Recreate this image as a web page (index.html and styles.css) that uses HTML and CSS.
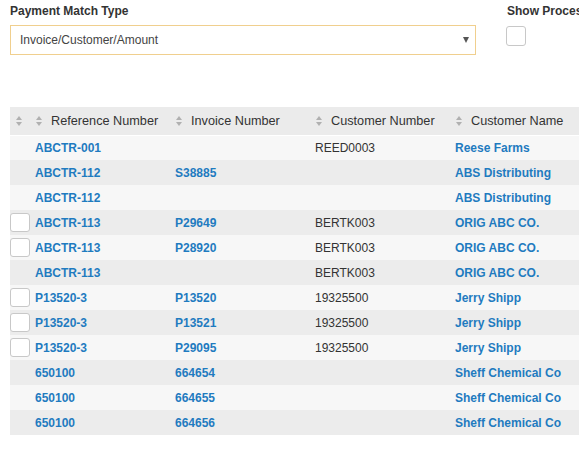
FILE: index.html
```html
<!DOCTYPE html>
<html lang="en">

<head>
    <meta charset="UTF-8">
    <title>Payment Match</title>
    <link rel="stylesheet" href="styles.css">
</head>

<body>

    <div class="page">

        <!-- Filtros -->
        <div class="filters">
            <div class="field match-type">
                <label class="field-label">Payment Match Type</label>
                <div class="select-box">
                    <span>Invoice/Customer/Amount</span>
                    <span class="caret"></span>
                </div>
            </div>
            <div class="field show-processed">
                <label class="field-label">Show Processed</label>
                <span class="check big"></span>
            </div>
        </div>

        <!-- Tabla -->
        <div class="grid-wrap">
            <table class="grid">
                <thead>
                    <tr>
                        <th class="col-check"><span class="sort"></span></th>
                        <th><span class="sort"></span>Reference Number</th>
                        <th><span class="sort"></span>Invoice Number</th>
                        <th><span class="sort"></span>Customer Number</th>
                        <th><span class="sort"></span>Customer Name</th>
                        <th><span class="sort"></span>Amount</th>
                    </tr>
                </thead>
                <tbody>
                    <tr>
                        <td></td>
                        <td><a>ABCTR-001</a></td>
                        <td></td>
                        <td>REED0003</td>
                        <td><a>Reese Farms</a></td>
                        <td></td>
                    </tr>
                    <tr>
                        <td></td>
                        <td><a>ABCTR-112</a></td>
                        <td><a>S38885</a></td>
                        <td></td>
                        <td><a>ABS Distributing</a></td>
                        <td></td>
                    </tr>
                    <tr>
                        <td></td>
                        <td><a>ABCTR-112</a></td>
                        <td></td>
                        <td></td>
                        <td><a>ABS Distributing</a></td>
                        <td></td>
                    </tr>
                    <tr>
                        <td><span class="check"></span></td>
                        <td><a>ABCTR-113</a></td>
                        <td><a>P29649</a></td>
                        <td>BERTK003</td>
                        <td><a>ORIG ABC CO.</a></td>
                        <td></td>
                    </tr>
                    <tr>
                        <td><span class="check"></span></td>
                        <td><a>ABCTR-113</a></td>
                        <td><a>P28920</a></td>
                        <td>BERTK003</td>
                        <td><a>ORIG ABC CO.</a></td>
                        <td></td>
                    </tr>
                    <tr>
                        <td></td>
                        <td><a>ABCTR-113</a></td>
                        <td></td>
                        <td>BERTK003</td>
                        <td><a>ORIG ABC CO.</a></td>
                        <td></td>
                    </tr>
                    <tr>
                        <td><span class="check"></span></td>
                        <td><a>P13520-3</a></td>
                        <td><a>P13520</a></td>
                        <td>19325500</td>
                        <td><a>Jerry Shipp</a></td>
                        <td></td>
                    </tr>
                    <tr>
                        <td><span class="check"></span></td>
                        <td><a>P13520-3</a></td>
                        <td><a>P13521</a></td>
                        <td>19325500</td>
                        <td><a>Jerry Shipp</a></td>
                        <td></td>
                    </tr>
                    <tr>
                        <td><span class="check"></span></td>
                        <td><a>P13520-3</a></td>
                        <td><a>P29095</a></td>
                        <td>19325500</td>
                        <td><a>Jerry Shipp</a></td>
                        <td></td>
                    </tr>
                    <tr>
                        <td></td>
                        <td><a>650100</a></td>
                        <td><a>664654</a></td>
                        <td></td>
                        <td><a>Sheff Chemical Co</a></td>
                        <td></td>
                    </tr>
                    <tr>
                        <td></td>
                        <td><a>650100</a></td>
                        <td><a>664655</a></td>
                        <td></td>
                        <td><a>Sheff Chemical Co</a></td>
                        <td></td>
                    </tr>
                    <tr>
                        <td></td>
                        <td><a>650100</a></td>
                        <td><a>664656</a></td>
                        <td></td>
                        <td><a>Sheff Chemical Co</a></td>
                        <td></td>
                    </tr>
                </tbody>
            </table>
        </div>

    </div>

</body>

</html>
```

FILE: styles.css
```css
body {
    margin: 0;
    padding: 0;
    background-color: #ffffff;
    font-family: "Liberation Sans", Arial, sans-serif;
    font-size: 12px;
    color: #333333;
    overflow: hidden;
}

.page {
    padding: 4px 0 0 10px;
    width: 569px;
    overflow: hidden;
}

.filters {
    display: flex;
    gap: 31px;
    height: 103px;
}

.field {
    display: flex;
    flex-direction: column;
    flex-shrink: 0;
}

.field-label {
    font-weight: bold;
    line-height: 14px;
    margin-bottom: 7px;
    white-space: nowrap;
}

.match-type {
    width: 466px;
}

.select-box {
    display: flex;
    justify-content: space-between;
    align-items: center;
    height: 28px;
    padding: 0 6px 0 9px;
    border: 1px solid #f0cf8e;
    color: #444444;
}

.caret {
    width: 0;
    height: 0;
    border-left: 3px solid transparent;
    border-right: 3px solid transparent;
    border-top: 6px solid #555555;
}

.show-processed {
    width: 120px;
}

.check {
    display: block;
    box-sizing: border-box;
    width: 20px;
    height: 19px;
    border: 1px solid #c8c8c8;
    border-radius: 3px;
    background-color: #ffffff;
}

.check.big {
    height: 20px;
    margin-left: -1px;
    margin-top: 1px;
}

.grid-wrap {
    overflow: hidden;
    width: 569px;
}

.grid {
    border-collapse: collapse;
    table-layout: fixed;
    width: 720px;
}

.grid th,
.grid td {
    box-sizing: border-box;
}

.grid th {
    height: 28px;
    padding: 0 0 0 6px;
    background-color: #ebebeb;
    font-size: 12.7px;
    font-weight: normal;
    text-align: left;
    white-space: nowrap;
    width: 140px;
    border-bottom: 1px solid #ffffff;
}

.grid th.col-check {
    width: 20px;
}

.sort {
    display: inline-block;
    position: relative;
    width: 7px;
    height: 10px;
    margin-right: 8px;
    vertical-align: -1px;
}

.sort::before,
.sort::after {
    content: "";
    position: absolute;
    left: 0;
    border-left: 3.5px solid transparent;
    border-right: 3.5px solid transparent;
}

.sort::before {
    top: 0;
    border-bottom: 4px solid #b0b0b0;
}

.sort::after {
    bottom: 0;
    border-top: 4px solid #b0b0b0;
}

.grid td {
    height: 25px;
    padding: 0 0 0 5px;
    white-space: nowrap;
}

.grid td:first-child {
    padding: 0;
}

.grid tbody tr:nth-child(odd) {
    background-color: #f7f7f7;
}

.grid tbody tr:nth-child(even) {
    background-color: #ececec;
}

.grid a {
    color: #1f7bc0;
    font-weight: bold;
}
```
